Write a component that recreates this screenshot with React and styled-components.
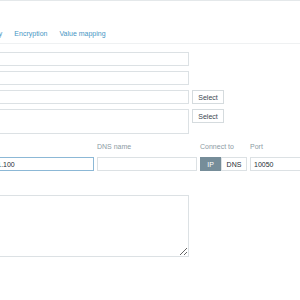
import React from "react";
import styled, { createGlobalStyle } from "styled-components";

const GlobalStyle = createGlobalStyle`
  html, body {
    margin: 0;
    padding: 0;
    background: #fff;
  }
  body {
    font-family: "Liberation Sans", Arial, sans-serif;
    color: #1f2c33;
  }
`;

const Page = styled.div`
  width: 300px;
  height: 300px;
  overflow: hidden;
  box-sizing: border-box;
  border-top: 1px solid #e4e8ea;
  background: #fff;
`;

const TabBar = styled.ul`
  display: flex;
  list-style: none;
  margin: 28px 0 0;
  padding: 0 0 0 0;
  border-bottom: 1px solid #eff1f2;
  width: 600px;
  transform: translateX(-147px);
`;

const Tab = styled.li`
  padding: 0 6px 4px;
  font-size: 7px;
  line-height: 10px;
  color: ${(p) => (p.active ? "#1f2c33" : "#4796c4")};
  white-space: nowrap;
`;

const Form = styled.div`
  margin-left: -34px;
  padding-top: 8px;
  display: flex;
  flex-direction: column;
`;

const FieldList = styled.div`
  display: flex;
  flex-direction: column;
  gap: 5px;
`;

const Row = styled.div`
  display: flex;
  gap: 3px;
  align-items: flex-start;
`;

const TextInput = styled.input`
  box-sizing: border-box;
  width: ${(p) => p.w || 223}px;
  height: 14px;
  margin: 0;
  padding: 0 3px;
  border: 1px solid ${(p) => (p.focused ? "#8cb8d6" : "#dce1e4")};
  background: #fff;
  font-family: inherit;
  font-size: 7px;
  color: #1f2c33;
  outline: none;
`;

const TextArea = styled.textarea`
  box-sizing: border-box;
  width: 223px;
  height: ${(p) => p.h}px;
  margin: 0;
  padding: 2px 3px;
  border: 1px solid #dce1e4;
  background: #fff;
  font-family: inherit;
  font-size: 7px;
  display: block;
  outline: none;
  resize: ${(p) => (p.grip ? "both" : "none")};
`;

const SelectButton = styled.button`
  box-sizing: border-box;
  width: 32px;
  height: 14px;
  margin: 0;
  padding: 0;
  border: 1px solid #d5dbde;
  background: #fff;
  font-family: inherit;
  font-size: 7px;
  color: #3b4850;
`;

const InterfaceGrid = styled.div`
  display: grid;
  grid-template-columns: 128px 100px 47px 60px;
  column-gap: 3px;
  row-gap: 5px;
  margin-top: 8px;
`;

const HeadCell = styled.div`
  font-size: 7px;
  line-height: 10px;
  color: #8c9ba4;
  white-space: nowrap;
`;

const Toggle = styled.div`
  display: flex;
  height: 14px;
`;

const ToggleOption = styled.div`
  box-sizing: border-box;
  width: ${(p) => p.w}px;
  display: flex;
  align-items: center;
  justify-content: center;
  font-size: 7px;
  border: 1px solid ${(p) => (p.on ? "#768d99" : "#dce1e4")};
  background: ${(p) => (p.on ? "#768d99" : "#fff")};
  color: ${(p) => (p.on ? "#fff" : "#1f2c33")};
`;

const BigArea = styled.div`
  margin-top: 24px;
`;

const tabs = ["Host", "IPMI", "Tags", "Macros", "Inventory", "Encryption", "Value mapping"];

export default function App() {
  return (
    <Page>
      <GlobalStyle />
      <TabBar>
        {tabs.map((t, i) => (
          <Tab key={t} active={i === 0}>
            {t}
          </Tab>
        ))}
      </TabBar>
      <Form>
        <FieldList>
          <Row>
            <TextInput defaultValue="" />
          </Row>
          <Row>
            <TextInput defaultValue="" />
          </Row>
          <Row>
            <TextInput defaultValue="" />
            <SelectButton>Select</SelectButton>
          </Row>
          <Row>
            <TextArea h={25} />
            <SelectButton>Select</SelectButton>
          </Row>
        </FieldList>
        <InterfaceGrid>
          <HeadCell>IP address</HeadCell>
          <HeadCell>DNS name</HeadCell>
          <HeadCell>Connect to</HeadCell>
          <HeadCell>Port</HeadCell>
          <TextInput w={128} focused defaultValue="192.168.1.100" />
          <TextInput w={100} defaultValue="" />
          <Toggle>
            <ToggleOption w={21} on>
              IP
            </ToggleOption>
            <ToggleOption w={26}>DNS</ToggleOption>
          </Toggle>
          <TextInput w={60} defaultValue="10050" />
        </InterfaceGrid>
        <BigArea>
          <TextArea h={62} grip />
        </BigArea>
      </Form>
    </Page>
  );
}
